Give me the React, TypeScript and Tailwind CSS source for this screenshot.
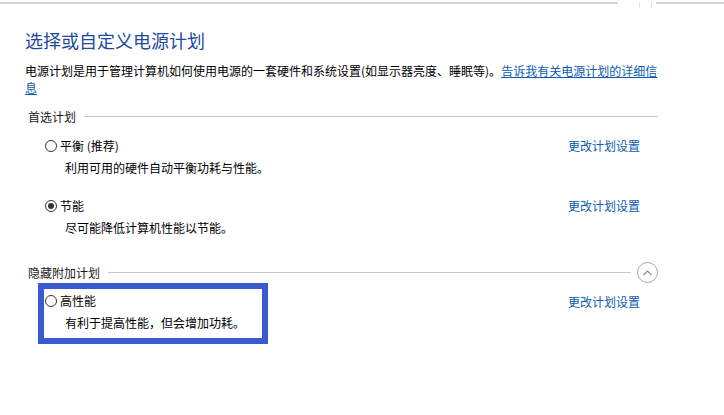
const font = { fontFamily: '"Noto Sans CJK SC", "Microsoft YaHei", sans-serif' };

function Radio({ checked }: { checked?: boolean }) {
  return (
    <span className="flex h-[12px] w-[12px] shrink-0 items-center justify-center rounded-full border border-[#333] bg-white">
      {checked && <span className="h-[6px] w-[6px] rounded-full bg-[#333]" />}
    </span>
  );
}

function PlanBody({ name, desc, checked }: { name: string; desc: string; checked?: boolean }) {
  return (
    <div className="flex flex-col">
      <div className="flex items-center gap-[3px] leading-[17px]">
        <Radio checked={checked} />
        <span className="text-[12px] text-black">{name}</span>
      </div>
      <p className="mt-[5px] pl-[20px] text-[12px] leading-[17px] text-black">{desc}</p>
    </div>
  );
}

function ChangeLink({ className }: { className?: string }) {
  return (
    <a className={`text-[12px] leading-[17px] text-[#0b5cb0] ${className ?? ''}`}>更改计划设置</a>
  );
}

function SectionHeader({ title, children }: { title: string; children?: React.ReactNode }) {
  return (
    <div className="flex h-[17px] items-center">
      <span className="text-[12px] leading-[17px] text-[#1b1b1b]">{title}</span>
      <div className="ml-[8px] h-px flex-1 bg-[#c9c9c9]" />
      {children}
    </div>
  );
}

export default function App() {
  return (
    <div className="h-[415px] w-[724px] overflow-hidden bg-white" style={font}>
      <div className="flex h-[8px] items-start pt-[2px]">
        <div className="h-[2px] w-[618px] bg-[#d6d6d6]" />
        <div className="ml-[21px] h-[6px] w-px bg-[#e4e4e4]" />
        <div className="ml-[11px] h-[6px] w-px bg-[#e4e4e4]" />
        <div className="ml-[4px] h-[2px] flex-1 bg-[#d6d6d6]" />
      </div>

      <div className="pl-[25px]">
        <h1 className="mt-[20px] text-[18px] font-normal leading-[24px] text-[#1d4a9b]">选择或自定义电源计划</h1>
        <p className="mt-[10px] w-[640px] text-[12px] leading-[17px] text-black">
          电源计划是用于管理计算机如何使用电源的一套硬件和系统设置(如显示器亮度、睡眠等)。
          <a className="text-[#0b5cb0] underline">告诉我有关电源计划的详细信息</a>
        </p>

        <div className="ml-[3px] mt-[12px] w-[630px]">
          <SectionHeader title="首选计划" />

          <div className="mt-[12px] flex items-start justify-between pl-[17px] pr-[18px]">
            <PlanBody name="平衡 (推荐)" desc="利用可用的硬件自动平衡功耗与性能。" />
            <ChangeLink />
          </div>

          <div className="mt-[21px] flex items-start justify-between pl-[17px] pr-[18px]">
            <PlanBody name="节能" desc="尽可能降低计算机性能以节能。" checked />
            <ChangeLink />
          </div>

          <div className="mt-[28px] w-[630px]">
            <SectionHeader title="隐藏附加计划">
              <div className="-my-[2px] ml-[6px] flex h-[21px] w-[21px] shrink-0 items-center justify-center rounded-full border border-[#a8a8a8]">
                <svg width="9" height="6" viewBox="0 0 9 6" fill="none">
                  <path d="M0.5 5 L4.5 1 L8.5 5" stroke="#8a8a8a" strokeWidth="1.1" />
                </svg>
              </div>
            </SectionHeader>
          </div>

          <div className="flex items-start justify-between pr-[18px]">
            <div className="ml-[10px] mt-[2px] w-[230px] border-[6px] border-[#3a5bcf] pb-[7px] pl-[1px] pt-[3px]">
              <PlanBody name="高性能" desc="有利于提高性能，但会增加功耗。" />
            </div>
            <ChangeLink className="mt-[12px]" />
          </div>
        </div>
      </div>
    </div>
  );
}
